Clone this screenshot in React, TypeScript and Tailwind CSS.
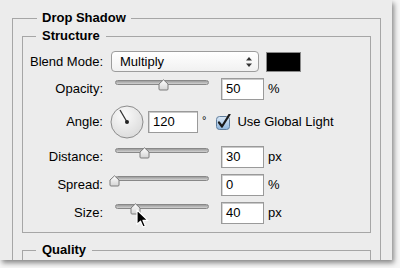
import React from 'react';

const field = 'border border-[#a6a6a6]';

function Thumb({ left }: { left: number }) {
  return (
    <svg className="absolute top-[1px]" style={{ left }} width="11" height="12" viewBox="0 0 11 12">
      <defs>
        <linearGradient id="thumbFill" x1="0" y1="0" x2="0" y2="1">
          <stop offset="0" stopColor="#ffffff" />
          <stop offset="1" stopColor="#d4d4d4" />
        </linearGradient>
      </defs>
      <path d="M1 5 L5.5 0.8 L10 5 L10 10 Q10 11 9 11 L2 11 Q1 11 1 10 Z" fill="url(#thumbFill)" stroke="#7d7d7d" strokeWidth="1" />
    </svg>
  );
}

function Cursor() {
  return (
    <svg className="absolute left-[21px] top-[7px]" width="14" height="20" viewBox="0 0 14 20">
      <path d="M1 1 L1 15.5 L4.5 12.2 L7 18 L9.4 17 L7 11.4 L11.8 11.4 Z" fill="#000" stroke="#fff" strokeWidth="1.2" strokeLinejoin="round" />
    </svg>
  );
}

function Slider({ pos, cursor }: { pos: number; cursor?: boolean }) {
  return (
    <div className="relative ml-[12px] h-[22px] w-[94px] shrink-0">
      <div className="mt-[2px] h-[5px] rounded-full border border-[#888888] bg-gradient-to-b from-[#9c9c9c] to-[#d2d2d2]" />
      <Thumb left={pos - 5} />
      {cursor && <Cursor />}
    </div>
  );
}

function NumBox({ value, w = 43 }: { value: string; w?: number }) {
  return (
    <div
      className="flex h-[22px] items-center border border-[#9a9a9a] bg-white pl-[4px] shadow-[inset_0_1px_0_#c9c9c9,inset_1px_0_0_#d6d6d6]"
      style={{ width: w }}
    >
      {value}
    </div>
  );
}

function Label({ children }: { children: React.ReactNode }) {
  return <div className="w-[80px] shrink-0 text-right">{children}</div>;
}

function SliderRow({ label, pos, value, unit, cursor }: { label: string; pos: number; value: string; unit: string; cursor?: boolean }) {
  return (
    <div className="flex h-[22px] items-center">
      <Label>{label}</Label>
      <Slider pos={pos} cursor={cursor} />
      <div className="ml-[12px]">
        <NumBox value={value} />
      </div>
      <span className="ml-[4px]">{unit}</span>
    </div>
  );
}

export default function App() {
  return (
    <div className="h-[268px] w-[400px] bg-[#f6f6f6] font-['Liberation_Sans',Arial,sans-serif] text-[13px] leading-[16px] text-black">
      <div className="h-[260px] w-[392px] overflow-hidden bg-[#ececec] pl-[12px] pr-[11px] pt-[10px] shadow-[2px_3px_5px_rgba(0,0,0,0.45)]">
        <fieldset className={`${field} h-[300px] px-[9px] pt-[2px]`}>
          <legend className="ml-[15px] px-[5px] font-bold">Drop Shadow</legend>

          <fieldset className={`${field} pb-[8px] pt-[7px]`}>
            <legend className="ml-[13px] px-[6px] font-bold">Structure</legend>

            {/* Blend mode */}
            <div className="flex h-[21px] items-center">
              <Label>Blend Mode:</Label>
              <div className="ml-[8px] flex h-[21px] w-[148px] items-center justify-between rounded-[4px] border border-[#9c9c9c] bg-gradient-to-b from-white to-[#f1f1f1] pl-[8px] pr-[6px]">
                <span>Multiply</span>
                <svg width="6" height="12" viewBox="0 0 6 12">
                  <path d="M0 4.5 L3 1 L6 4.5 Z" fill="#333" />
                  <path d="M0 7.5 L3 11 L6 7.5 Z" fill="#333" />
                </svg>
              </div>
              <div className="ml-[7px] h-[20px] w-[35px] border border-[#8a8a8a] bg-black" />
            </div>

            {/* Opacity */}
            <div className="mt-[6px]">
              <SliderRow label="Opacity:" pos={48} value="50" unit="%" />
            </div>

            {/* Angle */}
            <div className="mt-[5px] flex h-[34px] items-center">
              <Label>Angle:</Label>
              <svg className="ml-[7px] shrink-0" width="34" height="34" viewBox="0 0 34 34">
                <defs>
                  <radialGradient id="dialFill" cx="0.4" cy="0.3" r="0.8">
                    <stop offset="0" stopColor="#fbfbfb" />
                    <stop offset="1" stopColor="#d8d8d8" />
                  </radialGradient>
                </defs>
                <circle cx="17" cy="17" r="16" fill="url(#dialFill)" stroke="#8c8c8c" strokeWidth="1" />
                <line x1="17" y1="17" x2="10" y2="5" stroke="#333" strokeWidth="1.3" />
                <circle cx="17" cy="17" r="2" fill="#222" />
              </svg>
              <div className="ml-[4px]">
                <NumBox value="120" w={50} />
              </div>
              <span className="ml-[4px] self-start pt-[7px] text-[11px]">°</span>
              <svg className="ml-[10px] shrink-0" width="16" height="16" viewBox="0 0 16 16">
                <defs>
                  <linearGradient id="boxFill" x1="0" y1="0" x2="0" y2="1">
                    <stop offset="0" stopColor="#dbe8f5" />
                    <stop offset="1" stopColor="#8fb7de" />
                  </linearGradient>
                </defs>
                <rect x="0.5" y="2.5" width="13" height="13" rx="3" fill="url(#boxFill)" stroke="#5f7d9c" />
                <path d="M3 8.5 L6 12.5 L13.5 0.5" fill="none" stroke="#1a1a1a" strokeWidth="2.2" strokeLinecap="round" strokeLinejoin="round" />
              </svg>
              <span className="ml-[5px]">Use Global Light</span>
            </div>

            {/* Distance / Spread / Size */}
            <div className="mt-[7px]">
              <SliderRow label="Distance:" pos={29} value="30" unit="px" />
            </div>
            <div className="mt-[6px]">
              <SliderRow label="Spread:" pos={-1} value="0" unit="%" />
            </div>
            <div className="mt-[6px]">
              <SliderRow label="Size:" pos={20} value="40" unit="px" cursor />
            </div>
          </fieldset>

          <fieldset className={`${field} mt-[9px] h-[40px]`}>
            <legend className="ml-[13px] px-[6px] font-bold">Quality</legend>
          </fieldset>
        </fieldset>
      </div>
    </div>
  );
}
